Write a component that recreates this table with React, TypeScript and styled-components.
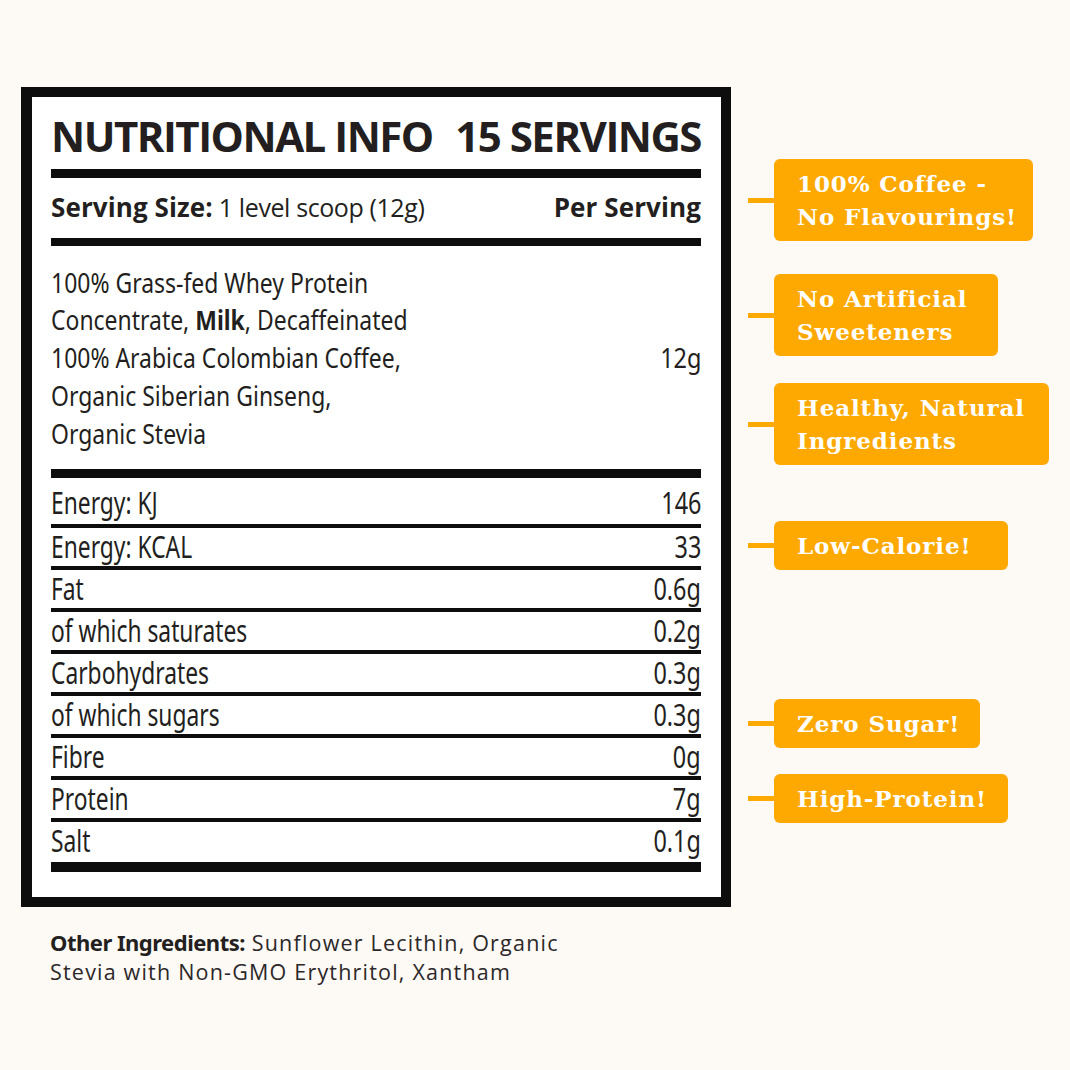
import React from "react";
import styled, { createGlobalStyle } from "styled-components";

const Global = createGlobalStyle`
  html, body { margin: 0; padding: 0; background: #fdf9f4; }
  body { font-family: "Open Sans", "Noto Sans", sans-serif; color: #231f20; }
  * { box-sizing: border-box; }
`;

const INK = "#231f20";
const ORANGE = "#fda902";
const NARROW = `"Noto Sans", "Open Sans", sans-serif`;

const Page = styled.div`
  width: 1070px;
  height: 1070px;
  display: flex;
  align-items: flex-start;
  padding: 87px 0 0 21px;
`;

const LeftCol = styled.div`
  display: flex;
  flex-direction: column;
`;

const Label = styled.div`
  width: 710px;
  height: 820px;
  border: 10px solid #0d0d0d;
  border-left-width: 11px;
  background: #ffffff;
  padding: 0 20px 25px 19px;
  display: flex;
  flex-direction: column;
`;

const TitleRow = styled.div`
  height: 72px;
  display: flex;
  justify-content: space-between;
  align-items: flex-start;
  padding-top: 17px;
  font-family: "Open Sans", sans-serif;
  font-weight: 700;
  font-size: 42px;
  line-height: 43px;
  letter-spacing: -1.5px;
  white-space: nowrap;
  color: ${INK};
`;

const Rule = styled.div<{ $h: number }>`
  height: ${(p) => p.$h}px;
  background: #0d0d0d;
  flex: none;
`;

const ServingRow = styled.div`
  height: 60px;
  display: flex;
  justify-content: space-between;
  align-items: flex-start;
  padding-top: 14px;
  font-family: "Open Sans", sans-serif;
  font-size: 25px;
  line-height: 30px;
  letter-spacing: -0.4px;
  white-space: nowrap;
  color: ${INK};
`;

const Strong = styled.strong`
  font-weight: 700;
  font-size: 26px;
  letter-spacing: 0.1px;
`;

const IngredientsRow = styled.div`
  height: 223px;
  display: flex;
  justify-content: space-between;
  align-items: center;
  padding-top: 1px;
  font-family: ${NARROW};
  font-size: 27px;
  line-height: 37.7px;
  white-space: nowrap;
  color: ${INK};
`;

const Squeeze = styled.span<{ $s: number; $right?: boolean }>`
  display: inline-block;
  transform: scaleX(${(p) => p.$s});
  transform-origin: ${(p) => (p.$right ? "right" : "left")} center;
`;

const IngredientText = styled.div`
  transform: scaleX(0.85);
  transform-origin: left center;
`;

const Bold = styled.b`
  font-weight: 700;
`;

const NutriRow = styled.div<{ $first?: boolean; $last?: boolean }>`
  display: flex;
  justify-content: space-between;
  align-items: flex-start;
  border-top: ${(p) => (p.$first ? "none" : "4px solid #0d0d0d")};
  height: ${(p) => (p.$first ? 46 : p.$last ? 44 : 42)}px;
  padding-top: ${(p) => (p.$first ? 6 : 0)}px;
  font-family: ${NARROW};
  font-size: 30px;
  line-height: 38px;
  white-space: nowrap;
  color: ${INK};
`;

const Other = styled.p`
  margin: 21px 0 0 29px;
  font-family: "Open Sans", sans-serif;
  font-size: 21.5px;
  line-height: 29px;
  letter-spacing: 1.2px;
  white-space: nowrap;
  color: #2b2829;
`;

const OtherLabel = styled.span`
  font-family: ${NARROW};
  font-weight: 700;
  font-size: 22px;
  letter-spacing: -0.5px;
  color: ${INK};
`;

const RightCol = styled.div`
  display: flex;
  flex-direction: column;
  padding: 72px 0 0 17px;
`;

const Callout = styled.div<{ $mt: number }>`
  display: flex;
  align-items: center;
  margin-top: ${(p) => p.$mt}px;
`;

const Connector = styled.div`
  width: 26px;
  height: 5px;
  background: ${ORANGE};
`;

const Tag = styled.div<{ $w: number }>`
  width: ${(p) => p.$w}px;
  background: ${ORANGE};
  border-radius: 6px;
  padding: 8px 0 8px 23px;
  color: #ffffff;
  font-family: "DejaVu Serif", "Liberation Serif", serif;
  font-weight: 700;
  font-size: 23px;
  line-height: 33px;
  letter-spacing: 0.9px;
  white-space: nowrap;
`;

const rows: [string, string][] = [
  ["Energy: KJ", "146"],
  ["Energy: KCAL", "33"],
  ["Fat", "0.6g"],
  ["of which saturates", "0.2g"],
  ["Carbohydrates", "0.3g"],
  ["of which sugars", "0.3g"],
  ["Fibre", "0g"],
  ["Protein", "7g"],
  ["Salt", "0.1g"],
];

const callouts: { lines: string[]; w: number; mt: number }[] = [
  { lines: ["100% Coffee -", "No Flavourings!"], w: 259, mt: 0 },
  { lines: ["No Artificial", "Sweeteners"], w: 224, mt: 33 },
  { lines: ["Healthy, Natural", "Ingredients"], w: 275, mt: 27 },
  { lines: ["Low-Calorie!"], w: 234, mt: 56 },
  { lines: ["Zero Sugar!"], w: 206, mt: 129 },
  { lines: ["High-Protein!"], w: 234, mt: 26 },
];

export default function App() {
  return (
    <>
      <Global />
      <Page>
        <LeftCol>
          <Label>
            <TitleRow>
              <span>NUTRITIONAL INFO</span>
              <span>15 SERVINGS</span>
            </TitleRow>
            <Rule $h={9} />
            <ServingRow>
              <span>
                <Strong>Serving Size:</Strong> 1 level scoop (12g)
              </span>
              <Strong>Per Serving</Strong>
            </ServingRow>
            <Rule $h={8} />
            <IngredientsRow>
              <IngredientText>
                100% Grass-fed Whey Protein
                <br />
                Concentrate, <Bold>Milk</Bold>, Decaffeinated
                <br />
                100% Arabica Colombian Coffee,
                <br />
                Organic Siberian Ginseng,
                <br />
                Organic Stevia
              </IngredientText>
              <Squeeze $s={0.87} $right>
                12g
              </Squeeze>
            </IngredientsRow>
            <Rule $h={9} />
            {rows.map(([k, v], i) => (
              <NutriRow key={k} $first={i === 0} $last={i === rows.length - 1}>
                <Squeeze $s={0.76}>{k}</Squeeze>
                <Squeeze $s={0.78} $right>
                  {v}
                </Squeeze>
              </NutriRow>
            ))}
            <Rule $h={10} />
          </Label>
          <Other>
            <OtherLabel>Other Ingredients:</OtherLabel> Sunflower Lecithin, Organic
            <br />
            Stevia with Non-GMO Erythritol, Xantham
          </Other>
        </LeftCol>
        <RightCol>
          {callouts.map((c) => (
            <Callout key={c.lines[0]} $mt={c.mt}>
              <Connector />
              <Tag $w={c.w}>
                {c.lines.map((l) => (
                  <div key={l}>{l}</div>
                ))}
              </Tag>
            </Callout>
          ))}
        </RightCol>
      </Page>
    </>
  );
}
